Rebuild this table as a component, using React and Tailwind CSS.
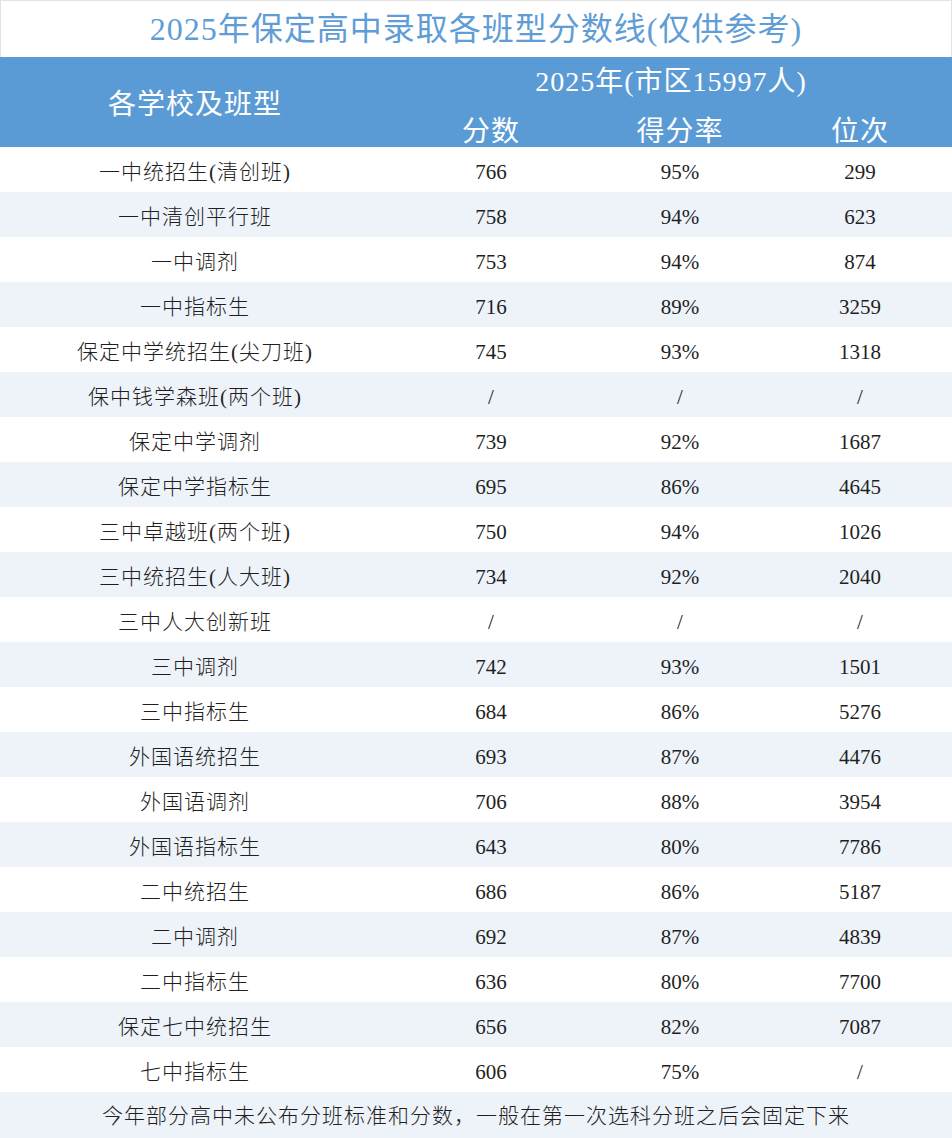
import React from "react";

const rows = [
  ["一中统招生(清创班)", "766", "95%", "299"],
  ["一中清创平行班", "758", "94%", "623"],
  ["一中调剂", "753", "94%", "874"],
  ["一中指标生", "716", "89%", "3259"],
  ["保定中学统招生(尖刀班)", "745", "93%", "1318"],
  ["保中钱学森班(两个班)", "/", "/", "/"],
  ["保定中学调剂", "739", "92%", "1687"],
  ["保定中学指标生", "695", "86%", "4645"],
  ["三中卓越班(两个班)", "750", "94%", "1026"],
  ["三中统招生(人大班)", "734", "92%", "2040"],
  ["三中人大创新班", "/", "/", "/"],
  ["三中调剂", "742", "93%", "1501"],
  ["三中指标生", "684", "86%", "5276"],
  ["外国语统招生", "693", "87%", "4476"],
  ["外国语调剂", "706", "88%", "3954"],
  ["外国语指标生", "643", "80%", "7786"],
  ["二中统招生", "686", "86%", "5187"],
  ["二中调剂", "692", "87%", "4839"],
  ["二中指标生", "636", "80%", "7700"],
  ["保定七中统招生", "656", "82%", "7087"],
  ["七中指标生", "606", "75%", "/"],
];

const font = {
  fontFamily: '"Liberation Serif", "Noto Sans CJK SC", serif',
};

const cols = "grid grid-cols-[390px_202px_176px_184px]";

export default function App() {
  return (
    <div className="w-[952px] h-[1138px] bg-white text-[#1f1f1f]" style={font}>
      {/* title */}
      <div className="h-[57px] border border-b-0 border-[#e3e3e3] flex items-center justify-center">
        <h1 className="text-[32px] leading-none text-[#5f9dd6] tracking-[1px]">
          2025年保定高中录取各班型分数线(仅供参考)
        </h1>
      </div>

      {/* header */}
      <div className={`${cols} bg-[#5b9bd5] text-white h-[90px]`}>
        <div className="row-span-2 flex items-center justify-center text-[28px] tracking-[1px]">
          各学校及班型
        </div>
        <div className="col-span-3 flex items-center justify-center text-[28px] tracking-[1px] pt-1">
          2025年(市区15997人)
        </div>
        <div className="flex items-center justify-center text-[28px] tracking-[1px] pt-2">分数</div>
        <div className="flex items-center justify-center text-[28px] tracking-[1px] pt-2">得分率</div>
        <div className="flex items-center justify-center text-[28px] tracking-[1px] pt-2">位次</div>
      </div>

      {/* data rows */}
      {rows.map((r, i) => (
        <div
          key={i}
          className={`${cols} h-[45px] text-[21px] font-light ${i % 2 === 1 ? "bg-[#eef3fa]" : "bg-white"}`}
        >
          <div className="flex items-center justify-center tracking-[1px] pt-1.5">{r[0]}</div>
          <div className="flex items-center justify-center pt-1.5">{r[1]}</div>
          <div className="flex items-center justify-center pt-1.5">{r[2]}</div>
          <div className="flex items-center justify-center pt-1.5">{r[3]}</div>
        </div>
      ))}

      {/* footer note */}
      <div className="h-[46px] bg-[#eef3fa] flex items-center justify-center text-[21px] font-light tracking-[1px] pt-1">
        今年部分高中未公布分班标准和分数，一般在第一次选科分班之后会固定下来
      </div>
    </div>
  );
}
